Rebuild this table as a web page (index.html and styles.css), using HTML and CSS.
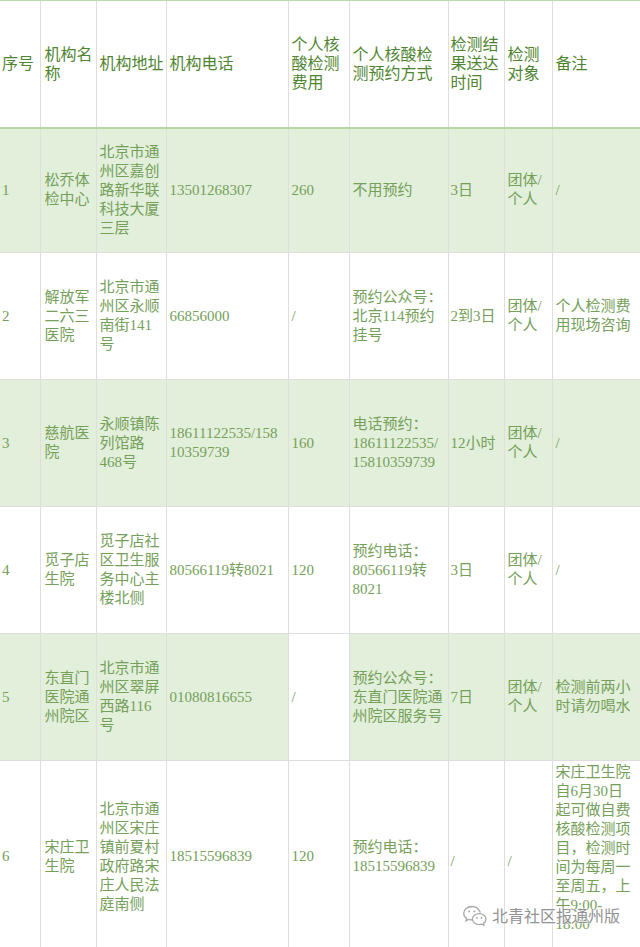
FILE: index.html
```html
<!DOCTYPE html>
<html lang="zh-CN">
<head>
<meta charset="utf-8">
<title>核酸检测机构</title>
<link rel="stylesheet" href="styles.css">
</head>
<body>
<div class="wrap">
<table class="grid">
<colgroup>
<col class="c1"><col class="c2"><col class="c3"><col class="c4"><col class="c5"><col class="c6"><col class="c7"><col class="c8"><col class="c9">
</colgroup>
<thead>
<tr class="head">
<th class="p1">序号</th>
<th class="p2">机构名<br>称</th>
<th>机构地址</th>
<th>机构电话</th>
<th>个人核<br>酸检测<br>费用</th>
<th>个人核酸检<br>测预约方式</th>
<th class="p7">检测结<br>果送达<br>时间</th>
<th>检测<br>对象</th>
<th>备注</th>
</tr>
</thead>
<tbody>
<tr class="row green r1">
<td class="p1">1</td>
<td class="p2">松乔体<br>检中心</td>
<td>北京市通<br>州区嘉创<br>路新华联<br>科技大厦<br>三层</td>
<td>13501268307</td>
<td>260</td>
<td>不用预约</td>
<td class="p7">3日</td>
<td>团体/<br>个人</td>
<td>/</td>
</tr>
<tr class="row">
<td class="p1">2</td>
<td class="p2">解放军<br>二六三<br>医院</td>
<td>北京市通<br>州区永顺<br>南街141<br>号</td>
<td>66856000</td>
<td>/</td>
<td>预约公众号：<br>北京114预约<br>挂号</td>
<td class="p7">2到3日</td>
<td>团体/<br>个人</td>
<td>个人检测费<br>用现场咨询</td>
</tr>
<tr class="row green">
<td class="p1">3</td>
<td class="p2">慈航医<br>院</td>
<td>永顺镇陈<br>列馆路<br>468号</td>
<td>18611122535/158<br>10359739</td>
<td>160</td>
<td>电话预约：<br>18611122535/<br>15810359739</td>
<td class="p7">12小时</td>
<td>团体/<br>个人</td>
<td>/</td>
</tr>
<tr class="row">
<td class="p1">4</td>
<td class="p2">觅子店<br>生院</td>
<td>觅子店社<br>区卫生服<br>务中心主<br>楼北侧</td>
<td>80566119转8021</td>
<td>120</td>
<td>预约电话：<br>80566119转<br>8021</td>
<td class="p7">3日</td>
<td>团体/<br>个人</td>
<td>/</td>
</tr>
<tr class="row green">
<td class="p1">5</td>
<td class="p2">东直门<br>医院通<br>州院区</td>
<td>北京市通<br>州区翠屏<br>西路116<br>号</td>
<td>01080816655</td>
<td class="plain">/</td>
<td>预约公众号：<br>东直门医院通<br>州院区服务号</td>
<td class="p7">7日</td>
<td>团体/<br>个人</td>
<td>检测前两小<br>时请勿喝水</td>
</tr>
<tr class="row last">
<td class="p1">6</td>
<td class="p2">宋庄卫<br>生院</td>
<td>北京市通<br>州区宋庄<br>镇前夏村<br>政府路宋<br>庄人民法<br>庭南侧</td>
<td>18515596839</td>
<td>120</td>
<td>预约电话：<br>18515596839</td>
<td class="p7 slash">/</td>
<td class="slash">/</td>
<td class="top">宋庄卫生院<br>自6月30日<br>起可做自费<br>核酸检测项<br>目，检测时<br>间为每周一<br>至周五，上<br>午9:00-<br>18:00</td>
</tr>
</tbody>
</table>
<div class="mark">
<svg class="mark-icon" width="26" height="22" viewBox="0 0 26 22">
<path d="M10 2.5c-4.7 0-8.3 3-8.3 6.8 0 2.1 1.1 3.9 2.9 5.1l-0.7 2.4 2.8-1.4c1 .3 2.1.5 3.3.5" fill="none" stroke="#a8a8a8" stroke-width="1.3" stroke-linecap="round"/>
<path d="M18.2 8.2c-1.4-3.4-4.6-5.700-8.2-5.7" fill="none" stroke="#a8a8a8" stroke-width="1.3" stroke-linecap="round"/>
<circle cx="7.2" cy="7.4" r="1" fill="#a8a8a8"/>
<circle cx="12.4" cy="7.4" r="1" fill="#a8a8a8"/>
<path d="M17.2 9.6c-3.8 0-6.8 2.5-6.8 5.5s3 5.5 6.8 5.5c.9 0 1.8-.1 2.6-.4l2.3 1.1-.6-1.9c1.5-1 2.5-2.6 2.5-4.3 0-3-3-5.5-6.8-5.5z" fill="none" stroke="#a8a8a8" stroke-width="1.3" stroke-linejoin="round"/>
<circle cx="15" cy="14" r=".9" fill="#a8a8a8"/>
<circle cx="19.4" cy="14" r=".9" fill="#a8a8a8"/>
</svg>
<span class="mark-text">北青社区报通州版</span>
</div>
</div>
</body>
</html>
```
FILE: styles.css
```css
html, body {
  margin: 0;
  padding: 0;
  background: #ffffff;
}

.wrap {
  position: relative;
  width: 640px;
  height: 947px;
  overflow: hidden;
}

.grid {
  width: 640px;
  table-layout: fixed;
  border-collapse: collapse;
  font-family: "Liberation Serif", "Noto Sans CJK SC", serif;
  font-size: 15px;
  line-height: 19px;
  color: #75a05a;
}

.c1 { width: 40px; }
.c2 { width: 56px; }
.c3 { width: 70px; }
.c4 { width: 122px; }
.c5 { width: 61px; }
.c6 { width: 99px; }
.c7 { width: 56px; }
.c8 { width: 48px; }
.c9 { width: 88px; }

.grid th,
.grid td {
  padding: 0 1px 0 3px;
  text-align: left;
  vertical-align: middle;
  white-space: nowrap;
  border-left: 1px solid #dedede;
  border-bottom: 1px solid #dedede;
}

.grid th:first-child,
.grid td:first-child {
  border-left: none;
}

.grid th {
  font-size: 16px;
  font-weight: normal;
  color: #4f8531;
  line-height: 19px;
  border-top: 1px solid #b9d9a5;
  border-bottom: 2px solid #b6d7a1;
}

.head {
  height: 127px;
}

.row {
  height: 127px;
}

.r1 {
  height: 125px;
}

.row.last {
  height: 192px;
}

.green td {
  background: #e2efda;
}

.green td.plain {
  background: #ffffff;
}

.p1 {
  padding-left: 2px !important;
}

.p2 {
  padding-left: 4px !important;
}

.p7 {
  padding-left: 2px !important;
}

.slash {
  padding-top: 10px !important;
}

.top {
  vertical-align: top !important;
  padding-top: 2px !important;
}

.mark {
  position: absolute;
  left: 462px;
  top: 904px;
  display: flex;
  align-items: center;
  gap: 4px;
}

.mark-text {
  font-family: "Noto Sans CJK SC", "Noto Sans", sans-serif;
  font-size: 16px;
  line-height: 22px;
  color: #929292;
  text-shadow: 0 0 2px #ffffff, 0 0 2px #ffffff;
}
```
